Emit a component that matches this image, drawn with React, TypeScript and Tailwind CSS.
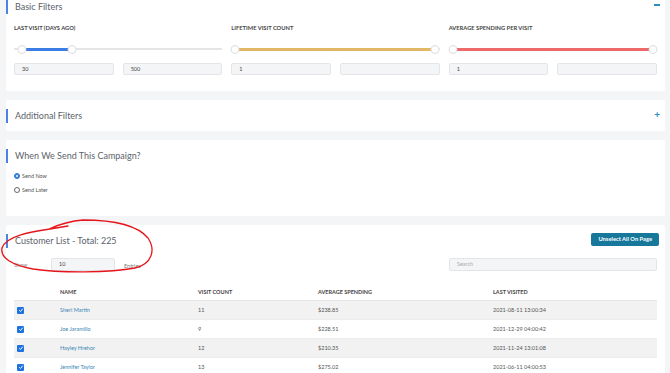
const font = { fontFamily: "Lato, 'Open Sans', sans-serif" };

function SectionTitle({ children }: { children: React.ReactNode }) {
  return (
    <div className="flex h-[14px] items-center border-l-2 border-[#4b82e3] pl-[7px] text-[9px] text-[#5c626a]">
      {children}
    </div>
  );
}

function Slider({ color, from, to }: { color: string; from: number; to: number }) {
  return (
    <div className="relative h-[10px]">
      <div className="absolute inset-x-0 top-[4px] h-[2px] rounded-full bg-[#e4e5e7]" />
      <div
        className={`absolute top-[3.5px] h-[3px] ${color}`}
        style={{ left: `${from}%`, right: `${100 - to}%` }}
      />
      <div
        className="absolute top-[0.5px] h-[9px] w-[9px] -translate-x-1/2 rounded-full border border-[#dcdde0] bg-white"
        style={{ left: `${from}%` }}
      />
      <div
        className="absolute top-[0.5px] h-[9px] w-[9px] -translate-x-1/2 rounded-full border border-[#dcdde0] bg-white"
        style={{ left: `${to}%` }}
      />
    </div>
  );
}

function Field({ value }: { value?: string }) {
  return (
    <div className="flex h-[12px] items-center rounded-[2px] border border-[#e3e5e8] bg-[#f4f5f7] px-[7px] text-[5.5px] text-[#444]">
      {value}
    </div>
  );
}

function Filter({ label, color, from, to, a, b }: { label: string; color: string; from: number; to: number; a: string; b?: string }) {
  return (
    <div className="flex flex-col">
      <div className="h-[10px] text-[5.75px] font-bold leading-[10px] text-[#444]">{label}</div>
      <div className="mt-[11px]">
        <Slider color={color} from={from} to={to} />
      </div>
      <div className="mt-[9px] grid grid-cols-2 gap-[9px]">
        <Field value={a} />
        <Field value={b} />
      </div>
    </div>
  );
}

function Radio({ checked, label }: { checked?: boolean; label: string }) {
  return (
    <div className="flex h-[14px] items-center gap-[2px] text-[5.5px] text-[#555]">
      <span
        className={`flex h-[6px] w-[6px] items-center justify-center rounded-full border ${checked ? "border-[#2f7de1] bg-[#2f7de1]" : "border-[#666] bg-white"}`}
      >
        {checked && <span className="h-[2.5px] w-[2.5px] rounded-full bg-white" />}
      </span>
      {label}
    </div>
  );
}

function Check() {
  return (
    <span className="flex h-[7px] w-[7px] items-center justify-center rounded-[1px] bg-[#1f73e0]">
      <svg viewBox="0 0 10 10" className="h-[6px] w-[6px]">
        <path d="M2 5.3 L4.2 7.4 L8 2.8" fill="none" stroke="white" strokeWidth="1.6" />
      </svg>
    </span>
  );
}

const rows = [
  ["Sheri Martin", "11", "$238.85", "2021-08-11 13:00:34"],
  ["Joe Jaramillo", "9", "$228.51", "2021-12-29 04:00:42"],
  ["Hayley Hrehor", "12", "$210.35", "2021-11-24 13:01:08"],
  ["Jennifer Taylor", "13", "$275.02", "2021-06-11 04:00:53"],
];

const cols = "grid grid-cols-[46px_138px_120px_175px_1fr] items-center";

export default function App() {
  return (
    <div className="relative h-[373px] w-[670px] overflow-hidden bg-[#f4f5f7] px-[6px]" style={font}>
      <div className="flex w-[659px] flex-col gap-[9px]">
        {/* Basic Filters */}
        <section className="h-[91px] rounded-b-[2px] bg-white">
          <div className="flex items-start justify-between pr-[5px]">
            <SectionTitle>Basic Filters</SectionTitle>
            <span className="mt-[4px] h-[1.5px] w-[6px] bg-[#2a8fc0]" />
          </div>
          <div className="mt-[9px] grid grid-cols-3 gap-x-[9px] px-[8px]">
            <Filter label="LAST VISIT (DAYS AGO)" color="bg-[#3b7de3]" from={4} to={28} a="30" b="500" />
            <Filter label="LIFETIME VISIT COUNT" color="bg-[#e0b866]" from={2} to={98} a="1" />
            <Filter label="AVERAGE SPENDING PER VISIT" color="bg-[#ee6a6a]" from={2} to={98} a="1" />
          </div>
        </section>

        {/* Additional Filters */}
        <section className="flex h-[31px] items-center justify-between rounded-[2px] bg-white pr-[5px]">
          <SectionTitle>Additional Filters</SectionTitle>
          <span className="-mt-[4px] text-[10px] font-bold leading-none text-[#2a8fc0]">+</span>
        </section>

        {/* When We Send */}
        <section className="h-[76px] rounded-[2px] bg-white pt-[9px]">
          <SectionTitle>When We Send This Campaign?</SectionTitle>
          <div className="mt-[6px] px-[8px]">
            <Radio checked label="Send Now" />
            <Radio label="Send Later" />
          </div>
        </section>

        {/* Customer List */}
        <section className="h-[160px] rounded-t-[2px] bg-white pt-[8px]">
          <div className="flex items-start justify-between pr-[6px]">
            <div className="pt-[1px]">
              <SectionTitle>Customer List - Total: 225</SectionTitle>
            </div>
            <button className="h-[13px] rounded-[2px] bg-[#17789b] px-[7px] text-[5.75px] font-bold text-white">
              Unselect All On Page
            </button>
          </div>
          <div className="mt-[10px] flex items-center px-[8px]">
            <span className="w-[37px] pt-[1px] text-[5.5px] text-[#888]">Show</span>
            <div className="flex h-[13px] w-[64px] items-center rounded-[2px] border border-[#e3e5e8] bg-[#f4f5f7] pl-[7px] text-[5.5px] text-[#444]">
              10
            </div>
            <span className="ml-[9px] pt-[3px] text-[5.5px] text-[#777]">Entries</span>
            <div className="ml-auto flex h-[13px] w-[208px] items-center rounded-[2px] border border-[#e3e5e8] bg-[#f4f5f7] pl-[7px] text-[5.5px] text-[#aaa]">
              Search
            </div>
          </div>
          <div className="mt-[13px] px-[8px] text-[5.5px]">
            <div className={`${cols} h-[17px] border-b border-[#e4e5e7] font-bold text-[#444]`}>
              <span />
              <span>NAME</span>
              <span>VISIT COUNT</span>
              <span>AVERAGE SPENDING</span>
              <span>LAST VISITED</span>
            </div>
            {rows.map((r, i) => (
              <div
                key={r[0]}
                className={`${cols} h-[19px] border-b border-[#ececec] text-[#555] ${i % 2 === 0 ? "bg-[#f2f2f2]" : "bg-white"}`}
              >
                <span className="pl-[3px]">
                  <Check />
                </span>
                <span className="text-[#3b87b5]">{r[0]}</span>
                <span>{r[1]}</span>
                <span>{r[2]}</span>
                <span>{r[3]}</span>
              </div>
            ))}
          </div>
        </section>
      </div>

      {/* red hand-drawn annotation */}
      <svg className="pointer-events-none absolute left-0 top-0" width="670" height="373" viewBox="0 0 670 373">
        <path
          d="M68 226 L50 229 C30 232 6 236 2 248 C0 258 12 265 33 269 C60 273 110 273 135 268 C152 264 156 250 148 238 C138 226 115 220 83 220 C70 221 60 224 49 229"
          fill="none"
          stroke="#e5151b"
          strokeWidth="1.3"
          strokeLinecap="round"
        />
      </svg>
    </div>
  );
}
